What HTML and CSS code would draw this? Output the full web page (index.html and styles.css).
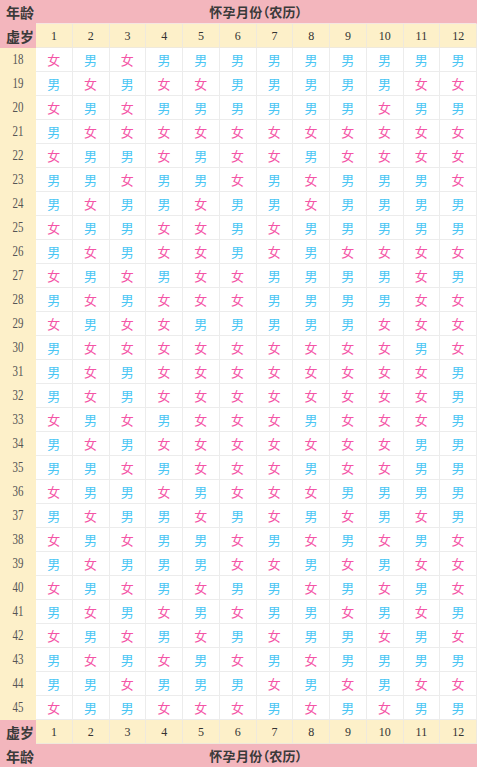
FILE: index.html
```html
<!DOCTYPE html>
<html lang="zh-CN">
<head>
<meta charset="utf-8">
<title>清宫表</title>
<link rel="stylesheet" href="styles.css">
</head>
<body>
<table class="chart">
<colgroup><col class="age-col"><col span="12"></colgroup>
<thead>
<tr class="title-row"><th class="corner">年龄</th><th colspan="12" class="title">怀孕月份（农历）</th></tr>
<tr class="month-row"><th class="corner">虚岁</th><th>1</th><th>2</th><th>3</th><th>4</th><th>5</th><th>6</th><th>7</th><th>8</th><th>9</th><th>10</th><th>11</th><th>12</th></tr>
</thead>
<tbody>
<tr><th class="age"><span>18</span></th><td class="f">女</td><td class="m">男</td><td class="f">女</td><td class="m">男</td><td class="m">男</td><td class="m">男</td><td class="m">男</td><td class="m">男</td><td class="m">男</td><td class="m">男</td><td class="m">男</td><td class="m">男</td></tr>
<tr><th class="age"><span>19</span></th><td class="m">男</td><td class="f">女</td><td class="m">男</td><td class="f">女</td><td class="f">女</td><td class="m">男</td><td class="m">男</td><td class="m">男</td><td class="m">男</td><td class="m">男</td><td class="f">女</td><td class="f">女</td></tr>
<tr><th class="age"><span>20</span></th><td class="f">女</td><td class="m">男</td><td class="f">女</td><td class="m">男</td><td class="m">男</td><td class="m">男</td><td class="m">男</td><td class="m">男</td><td class="m">男</td><td class="f">女</td><td class="m">男</td><td class="m">男</td></tr>
<tr><th class="age"><span>21</span></th><td class="m">男</td><td class="f">女</td><td class="f">女</td><td class="f">女</td><td class="f">女</td><td class="f">女</td><td class="f">女</td><td class="f">女</td><td class="f">女</td><td class="f">女</td><td class="f">女</td><td class="f">女</td></tr>
<tr><th class="age"><span>22</span></th><td class="f">女</td><td class="m">男</td><td class="m">男</td><td class="f">女</td><td class="m">男</td><td class="f">女</td><td class="f">女</td><td class="m">男</td><td class="f">女</td><td class="f">女</td><td class="f">女</td><td class="f">女</td></tr>
<tr><th class="age"><span>23</span></th><td class="m">男</td><td class="m">男</td><td class="f">女</td><td class="m">男</td><td class="m">男</td><td class="f">女</td><td class="m">男</td><td class="f">女</td><td class="m">男</td><td class="m">男</td><td class="m">男</td><td class="f">女</td></tr>
<tr><th class="age"><span>24</span></th><td class="m">男</td><td class="f">女</td><td class="m">男</td><td class="m">男</td><td class="f">女</td><td class="m">男</td><td class="m">男</td><td class="f">女</td><td class="m">男</td><td class="m">男</td><td class="m">男</td><td class="m">男</td></tr>
<tr><th class="age"><span>25</span></th><td class="f">女</td><td class="m">男</td><td class="m">男</td><td class="f">女</td><td class="f">女</td><td class="m">男</td><td class="f">女</td><td class="m">男</td><td class="m">男</td><td class="m">男</td><td class="m">男</td><td class="m">男</td></tr>
<tr><th class="age"><span>26</span></th><td class="m">男</td><td class="f">女</td><td class="m">男</td><td class="f">女</td><td class="f">女</td><td class="m">男</td><td class="f">女</td><td class="m">男</td><td class="f">女</td><td class="f">女</td><td class="f">女</td><td class="f">女</td></tr>
<tr><th class="age"><span>27</span></th><td class="f">女</td><td class="m">男</td><td class="f">女</td><td class="m">男</td><td class="f">女</td><td class="f">女</td><td class="m">男</td><td class="m">男</td><td class="m">男</td><td class="m">男</td><td class="f">女</td><td class="m">男</td></tr>
<tr><th class="age"><span>28</span></th><td class="m">男</td><td class="f">女</td><td class="m">男</td><td class="f">女</td><td class="f">女</td><td class="f">女</td><td class="m">男</td><td class="m">男</td><td class="m">男</td><td class="m">男</td><td class="f">女</td><td class="f">女</td></tr>
<tr><th class="age"><span>29</span></th><td class="f">女</td><td class="m">男</td><td class="f">女</td><td class="f">女</td><td class="m">男</td><td class="m">男</td><td class="m">男</td><td class="m">男</td><td class="m">男</td><td class="f">女</td><td class="f">女</td><td class="f">女</td></tr>
<tr><th class="age"><span>30</span></th><td class="m">男</td><td class="f">女</td><td class="f">女</td><td class="f">女</td><td class="f">女</td><td class="f">女</td><td class="f">女</td><td class="f">女</td><td class="f">女</td><td class="f">女</td><td class="m">男</td><td class="f">女</td></tr>
<tr><th class="age"><span>31</span></th><td class="m">男</td><td class="f">女</td><td class="m">男</td><td class="f">女</td><td class="f">女</td><td class="f">女</td><td class="f">女</td><td class="f">女</td><td class="f">女</td><td class="f">女</td><td class="f">女</td><td class="m">男</td></tr>
<tr><th class="age"><span>32</span></th><td class="m">男</td><td class="f">女</td><td class="m">男</td><td class="f">女</td><td class="f">女</td><td class="f">女</td><td class="f">女</td><td class="f">女</td><td class="f">女</td><td class="f">女</td><td class="f">女</td><td class="m">男</td></tr>
<tr><th class="age"><span>33</span></th><td class="f">女</td><td class="m">男</td><td class="f">女</td><td class="m">男</td><td class="f">女</td><td class="f">女</td><td class="f">女</td><td class="m">男</td><td class="f">女</td><td class="f">女</td><td class="f">女</td><td class="m">男</td></tr>
<tr><th class="age"><span>34</span></th><td class="m">男</td><td class="f">女</td><td class="m">男</td><td class="f">女</td><td class="f">女</td><td class="f">女</td><td class="f">女</td><td class="f">女</td><td class="f">女</td><td class="f">女</td><td class="m">男</td><td class="m">男</td></tr>
<tr><th class="age"><span>35</span></th><td class="m">男</td><td class="m">男</td><td class="f">女</td><td class="m">男</td><td class="f">女</td><td class="f">女</td><td class="f">女</td><td class="m">男</td><td class="f">女</td><td class="f">女</td><td class="m">男</td><td class="m">男</td></tr>
<tr><th class="age"><span>36</span></th><td class="f">女</td><td class="m">男</td><td class="m">男</td><td class="f">女</td><td class="m">男</td><td class="f">女</td><td class="f">女</td><td class="f">女</td><td class="m">男</td><td class="m">男</td><td class="m">男</td><td class="m">男</td></tr>
<tr><th class="age"><span>37</span></th><td class="m">男</td><td class="f">女</td><td class="m">男</td><td class="m">男</td><td class="f">女</td><td class="m">男</td><td class="f">女</td><td class="m">男</td><td class="f">女</td><td class="m">男</td><td class="f">女</td><td class="m">男</td></tr>
<tr><th class="age"><span>38</span></th><td class="f">女</td><td class="m">男</td><td class="f">女</td><td class="m">男</td><td class="m">男</td><td class="f">女</td><td class="m">男</td><td class="f">女</td><td class="m">男</td><td class="f">女</td><td class="m">男</td><td class="f">女</td></tr>
<tr><th class="age"><span>39</span></th><td class="m">男</td><td class="f">女</td><td class="m">男</td><td class="m">男</td><td class="m">男</td><td class="f">女</td><td class="f">女</td><td class="m">男</td><td class="f">女</td><td class="m">男</td><td class="f">女</td><td class="f">女</td></tr>
<tr><th class="age"><span>40</span></th><td class="f">女</td><td class="m">男</td><td class="f">女</td><td class="m">男</td><td class="f">女</td><td class="m">男</td><td class="m">男</td><td class="f">女</td><td class="m">男</td><td class="f">女</td><td class="m">男</td><td class="f">女</td></tr>
<tr><th class="age"><span>41</span></th><td class="m">男</td><td class="f">女</td><td class="m">男</td><td class="f">女</td><td class="m">男</td><td class="f">女</td><td class="m">男</td><td class="m">男</td><td class="f">女</td><td class="m">男</td><td class="f">女</td><td class="m">男</td></tr>
<tr><th class="age"><span>42</span></th><td class="f">女</td><td class="m">男</td><td class="f">女</td><td class="m">男</td><td class="f">女</td><td class="m">男</td><td class="f">女</td><td class="m">男</td><td class="m">男</td><td class="f">女</td><td class="m">男</td><td class="f">女</td></tr>
<tr><th class="age"><span>43</span></th><td class="m">男</td><td class="f">女</td><td class="m">男</td><td class="f">女</td><td class="m">男</td><td class="f">女</td><td class="m">男</td><td class="f">女</td><td class="m">男</td><td class="m">男</td><td class="m">男</td><td class="m">男</td></tr>
<tr><th class="age"><span>44</span></th><td class="m">男</td><td class="m">男</td><td class="f">女</td><td class="m">男</td><td class="m">男</td><td class="m">男</td><td class="f">女</td><td class="m">男</td><td class="f">女</td><td class="m">男</td><td class="f">女</td><td class="f">女</td></tr>
<tr><th class="age"><span>45</span></th><td class="f">女</td><td class="m">男</td><td class="m">男</td><td class="f">女</td><td class="f">女</td><td class="f">女</td><td class="m">男</td><td class="f">女</td><td class="m">男</td><td class="f">女</td><td class="m">男</td><td class="m">男</td></tr>
</tbody>
<tfoot>
<tr class="month-row"><th class="corner">虚岁</th><th>1</th><th>2</th><th>3</th><th>4</th><th>5</th><th>6</th><th>7</th><th>8</th><th>9</th><th>10</th><th>11</th><th>12</th></tr>
<tr class="title-row"><th class="corner">年龄</th><th colspan="12" class="title">怀孕月份（农历）</th></tr>
</tfoot>
</table>
</body>
</html>
```

FILE: styles.css
```css
html, body {
  margin: 0;
  padding: 0;
  background: #ffffff;
}

.chart {
  width: 477px;
  table-layout: fixed;
  border-collapse: separate;
  border-spacing: 0;
  font-family: "Noto Sans CJK SC", "Noto Sans", sans-serif;
}

.age-col {
  width: 36px;
}

.chart th,
.chart td {
  box-sizing: border-box;
  height: 24px;
  padding: 0;
  text-align: center;
  vertical-align: middle;
  border-right: 1px solid #ececec;
  border-bottom: 1px solid #ececec;
  line-height: 22px;
}

.corner {
  background: #f3b6bd;
  border-color: #f3b6bd !important;
  font-size: 14px;
  font-weight: 700;
  color: #3a3a3a;
  padding-left: 5px !important;
}

.title-row .title {
  background: #f3b6bd;
  border-right-color: #f3b6bd;
  border-bottom-color: #f5e6e2;
  font-size: 13px;
  font-weight: 700;
  color: #3a3a3a;
  letter-spacing: 0.3px;
  font-feature-settings: "palt";
}

tfoot .title-row th {
  border-bottom-color: #f3b6bd;
}

.month-row th:not(.corner) {
  background: #fdf0c9;
  border-color: #efe9dc;
  font-family: "Liberation Serif", serif;
  font-weight: 400;
  font-size: 12px;
  color: #333333;
}

.age {
  background: #fdf0c9;
  border-color: #fdf0c9 !important;
  font-family: "Liberation Serif", serif;
  font-weight: 400;
  font-size: 14px;
  color: #555555;
}

.age span {
  display: inline-block;
  transform: scaleX(0.78);
}

.chart td {
  font-size: 13px;
  background: #ffffff;
}

.chart td.f {
  color: #f455a6;
}

.chart td.m {
  color: #4ac6f4;
}
```
